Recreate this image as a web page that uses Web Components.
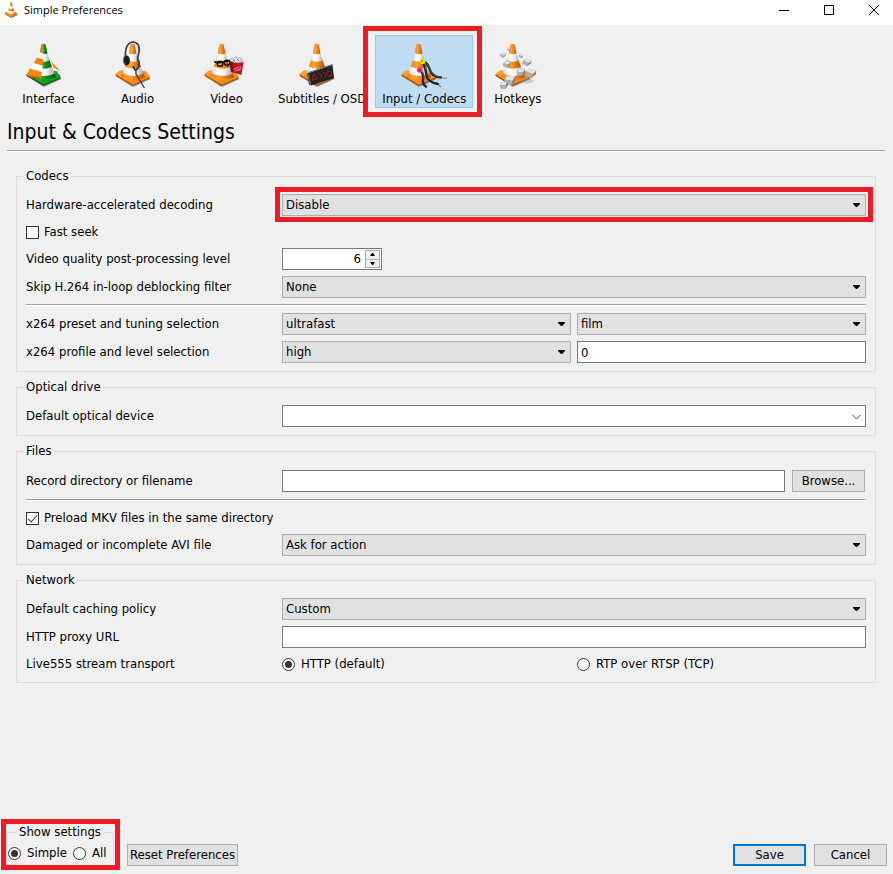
<!DOCTYPE html>
<html lang="en">
<head>
<meta charset="utf-8">
<title>Simple Preferences</title>
<style>
  html { height: 100%; }
  body { margin: 0; min-height: 100%; display: flex; background: #f0f0f0; color: #000; font: 13px/16px "DejaVu Sans Condensed", "DejaVu Sans", Tahoma, sans-serif; }
  prefs-window { flex: 1; min-width: 0; }
</style>
</head>
<body>
<prefs-window heading="Simple Preferences">
  <tool-strip slot="tools">
    <tool-item icon="interface">Interface</tool-item>
    <tool-item icon="audio">Audio</tool-item>
    <tool-item icon="video">Video</tool-item>
    <tool-item icon="subtitles">Subtitles / OSD</tool-item>
    <tool-item icon="input" selected>Input / Codecs</tool-item>
    <tool-item icon="hotkeys">Hotkeys</tool-item>
  </tool-strip>
  <page-title slot="title">Input &amp; Codecs Settings</page-title>

  <pref-group name="Codecs">
    <pref-row label="Hardware-accelerated decoding" fields="select=Disable" marked></pref-row>
    <pref-check label="Fast seek"></pref-check>
    <pref-row label="Video quality post-processing level" fields="spin=6"></pref-row>
    <pref-row label="Skip H.264 in-loop deblocking filter" fields="select=None"></pref-row>
    <pref-rule></pref-rule>
    <pref-row label="x264 preset and tuning selection" fields="select=ultrafast|select=film"></pref-row>
    <pref-row label="x264 profile and level selection" fields="select=high|text=0"></pref-row>
  </pref-group>
  <pref-group name="Optical drive">
    <pref-row label="Default optical device" fields="combo="></pref-row>
  </pref-group>
  <pref-group name="Files">
    <pref-row label="Record directory or filename" fields="file=Browse..."></pref-row>
    <pref-rule></pref-rule>
    <pref-check label="Preload MKV files in the same directory" checked></pref-check>
    <pref-row label="Damaged or incomplete AVI file" fields="select=Ask for action"></pref-row>
  </pref-group>
  <pref-group name="Network">
    <pref-row label="Default caching policy" fields="select=Custom"></pref-row>
    <pref-row label="HTTP proxy URL" fields="text="></pref-row>
    <pref-row label="Live555 stream transport" fields="radio=HTTP (default)|radio=RTP over RTSP (TCP)"></pref-row>
  </pref-group>

  <show-settings slot="footer"></show-settings>
  <push-button slot="footer">Reset Preferences</push-button>
  <push-button slot="actions" primary>Save</push-button>
  <push-button slot="actions">Cancel</push-button>
</prefs-window>

<script>
const ORANGE = ['#ffa338', '#f08010', '#b05208'];
const GREEN = ['#34b83a', '#0b921a', '#045c0c'];

// Traffic cone on a 50 x 50 canvas; the tip is at (19.5, 5).
function cone(c = ORANGE, id = 'o') {
  return `<defs>
    <linearGradient id="${id}" x1="0" x2="1"><stop offset="0" stop-color="${c[1]}"/><stop offset=".35" stop-color="${c[0]}"/><stop offset=".6" stop-color="${c[1]}"/><stop offset="1" stop-color="${c[2]}"/></linearGradient>
    <linearGradient id="${id}b" x1="0" x2="1" y2="1"><stop offset="0" stop-color="${c[0]}"/><stop offset="1" stop-color="${c[1]}"/></linearGradient>
    <linearGradient id="${id}w" x1="0" x2="1"><stop offset="0" stop-color="#d8d8d8"/><stop offset=".3" stop-color="#fff"/><stop offset=".6" stop-color="#f4f4f4"/><stop offset="1" stop-color="#a8a8a8"/></linearGradient></defs>
  <path d="M3 37L19 47.500Q20 48 21.500 47.300L37.500 40L36 38z" fill="#333" opacity=".55"/>
  <path d="M2.500 35.500L6.500 32L32.500 32.500L36.500 38Q37 39.500 35.500 40L21 46.300Q19.500 47 18 46L3 37.200Q2 36.500 2.500 35.500z" fill="${c[2]}"/>
  <path d="M2.500 35.200L7 31.300L32.500 32L36.500 37.500Q36.500 38.500 35 39L21 45Q19.500 45.500 18 44.600z" fill="url(#${id}b)"/>
  <path d="M10 33.500L8 37.500Q18 43.500 32 38.500L30.500 33.500z" fill="url(#${id})"/>
  <path d="M12 27.500L9.700 34Q18 39.500 30.500 34.800L27.800 27.500z" fill="url(#${id}w)"/>
  <path d="M14 21L11.800 27.600Q19 31.500 28 28L25.500 21z" fill="url(#${id})"/>
  <path d="M16 14L13.800 21.200Q19.500 24 25.700 21.500L23.300 14z" fill="url(#${id}w)"/>
  <path d="M17.300 5.500Q19.500 4 21.600 5.500L23.500 14.300Q19.500 16.200 15.900 14z" fill="url(#${id})"/>`;
}
const key = (x, y, s, r) => `<g transform="translate(${x} ${y}) rotate(${r}) scale(${s})"><path d="M-5 -1L-2 -4L5 -3L5 1L1 5L-5 3z" fill="#808080"/><path d="M-5 -1L-2 -4L5 -3L2 1z" fill="#e4e4e4"/><path d="M-5 -1L2 1L1 5L-5 3z" fill="#b0b0b0"/></g>`;
const ICONS = {
  interface: () => `${cone(GREEN, 'g')}
    <path d="M25 18L36.500 32L30 29z" fill="#e8e8e8"/><path d="M27 22L30.500 26L36.500 32L29.500 28.500z" fill="#f08a2a"/>
    <path d="M18 5Q19 4.500 19.500 4.500L19.500 14.500L16 14z" fill="#f08010"/>
    <path d="M16 13.500L19.500 14.500L19.300 21L13 19z" fill="#fafafa"/>
    <path d="M13 18.500L19.300 20.500L18.700 27L9.500 24.500z" fill="#f08010"/>
    <path d="M9.600 24L18.700 26.700L18 33.500L5.500 30z" fill="#fff"/>
    <path d="M5.500 29.500L18 33L16 39.500L2.500 37z" fill="#f58a12"/><path d="M2.500 36L16 38.500V40L3 38z" fill="#b85a04"/>`,
  audio: () => `${cone()}
    <g fill="none" stroke="#3a3a3a" stroke-width="1.700"><path d="M12.500 19Q11.500 4 20 3Q27.500 3.500 26 13L24.500 20Q27 23 26 27Q25 30.500 22 31L20 27"/><path d="M23 30.500V35L31.500 49" stroke-width="1.300"/></g>
    <ellipse cx="13.500" cy="21.500" rx="3.400" ry="5" fill="#1c1c1c"/><path d="M11 18Q9.500 21.500 11.500 25" stroke="#777" fill="none"/>`,
  video: () => `${cone()}
    <path d="M27 21.500L41.500 22.500L39.500 36L29.500 33z" fill="#c8101e"/><path d="M27 21.500L31 22L31 33.500L29 33z" fill="#8c0a14"/>
    <path d="M32.500 29L39 27L38.500 31L32.500 32.500z" fill="#e08088"/><path d="M33 31L38 28.500" stroke="#a01018"/>
    <path d="M28 22Q27 18.500 31 19.500Q33 16.500 36 19Q40 18 40.500 21Q42 21.500 41 23Q34 25 28 22z" fill="#dfe4ee" stroke="#9aa0b0" stroke-width=".7"/><path d="M31 21l2 1M35 20l2 2M38 21.500l1 .5" stroke="#778"/>
    <g fill="none" stroke="#111" stroke-width="1.400"><path d="M12 22.500L16 24L28 21.500"/><ellipse cx="18" cy="24.800" rx="2.800" ry="2.500"/><ellipse cx="25" cy="23.800" rx="2.800" ry="2.500"/></g>`,
  subtitles: () => `${cone()}
    <path d="M11.500 34L35.500 26L37 39L14 46.500z" fill="#222"/><path d="M10 34.500L12 33.500L14.500 46.500L12 46z" fill="#555"/><path d="M11.500 33.500L35.500 25.500" stroke="#666"/>
    <g fill="none" stroke="#b8161e" stroke-width="1"><path d="M15 41.500L17 35L20.500 39.500z"/><path d="M22 34.500L25 36.500L23.500 39.500M26 33L29 35.500L27.500 38.500"/><circle cx="32.300" cy="34.500" r="2.500"/></g>`,
  input: () => `${cone()}
    <g fill="none" stroke="#222" stroke-width="2.400" stroke-linecap="round"><path d="M24 22Q29 24 31 31T42 38.500"/><path d="M23 22Q27 29 27.500 36T39 45"/><path d="M21 31Q25 35 24 40T27 47.500"/></g>
    <path d="M41 38.500L48 39.500M39 45L42 48" stroke="#555" stroke-width="1.200" opacity=".6"/><g fill="none" stroke="#777" stroke-width=".6"><path d="M25 23Q30 25 31.500 31T41 38M22 31Q26 35 25 40"/></g>
    <circle cx="23.500" cy="22.500" r="2.800" fill="#f4e000"/><circle cx="23" cy="22" r="1" fill="#a89400"/><circle cx="20.800" cy="31" r="2.800" fill="#e8308a"/><circle cx="20.500" cy="31" r="1" fill="#701040"/><path d="M27 27v3" stroke="#18a030" stroke-width="1.500"/>`,
  hotkeys: () => `${cone()}<ellipse cx="34" cy="42" rx="7" ry="2.500" fill="#999" opacity=".4"/>
    ${key(16, 10, .3, 0)}${key(10, 16, .5, 10)}${key(14, 25, .7, 0)}${key(28, 17, .4, 20)}${key(34, 23, .8, 15)}${key(28, 33, .8, -5)}${key(38, 34, 1, 5)}${key(17, 41, 1.1, -5)}${key(11, 46, .8, -20)}`,
};

class ShadowElement extends HTMLElement {
  connectedCallback() {
    if (this.shadowRoot) return;
    this.attachShadow({ mode: 'open' }).innerHTML = `<style>*{box-sizing:border-box}${this.styles()}</style>${this.markup()}`;
  }
}

const CONTROL_CSS = `
  input, select, button { font: inherit; color: inherit; margin: 0; border-radius: 0; }
  label { white-space: nowrap; }
  input[type=checkbox], input[type=radio] { appearance: none; flex: none; width: 13px; height: 13px; border: 1px solid #333; background: #fff; display: grid; place-items: center; }
  input[type=radio] { border-radius: 50%; }
  input[type=radio]:checked::after { content: ""; width: 7px; height: 7px; border-radius: 50%; background: #333; }
  .opt { display: flex; align-items: center; gap: 6px; height: 20px; }
`;
const BUTTON_CSS = `
  button { height: 22px; min-width: 73px; border: 1px solid #adadad; background: #e1e1e1; font: inherit; color: inherit; padding: 0 2px; border-radius: 0; white-space: nowrap; display: block; }
`;

customElements.define('prefs-window', class extends ShadowElement {
  styles() { return `
    :host { display: flex; flex-direction: column; min-height: 100vh; }
    header { display: flex; align-items: center; justify-content: space-between; height: 25px; background: #fff; padding: 0 0 6px 4px; }
    .name { display: flex; align-items: center; gap: 6px; font: 11px/16px "Open Sans", "Noto Sans", sans-serif; }
    .controls { display: flex; }
    .controls button { width: 45px; height: 19px; padding: 0 0 0 6px; border: 0; background: none; display: grid; place-items: center; }
    svg { display: block; }
    main { display: flex; flex-direction: column; gap: 15px; padding: 25px 17px 20px 16px; }
    footer { display: flex; align-items: flex-end; gap: 8px; margin-top: auto; padding: 0 6px 8px; }
    .actions { display: flex; gap: 8px; margin-left: auto; }`; }
  markup() { return `
    <header>
      <div class="name"><svg width="14" height="16" viewBox="1 4 37 44" preserveAspectRatio="none">${cone()}</svg><span>${this.getAttribute('heading')}</span></div>
      <div class="controls">
        <button aria-label="Minimize"><svg width="10" height="10"><path d="M0 5.500H10" stroke="#000"/></svg></button>
        <button aria-label="Maximize"><svg width="10" height="10"><path d="M.5.5H9.500V9.500H.5z" fill="none" stroke="#000"/></svg></button>
        <button aria-label="Close"><svg width="10" height="10"><path d="M0 0L10 10M10 0L0 10" stroke="#000"/></svg></button>
      </div>
    </header>
    <slot name="tools"></slot><slot name="title"></slot>
    <main><slot></slot></main>
    <footer><slot name="footer"></slot><div class="actions"><slot name="actions"></slot></div></footer>`; }
});

customElements.define('tool-strip', class extends ShadowElement {
  styles() { return `:host { display: flex; padding: 10px 4px 0; }`; }
  markup() { return `<slot></slot>`; }
});

customElements.define('tool-item', class extends ShadowElement {
  styles() { return `
    :host { display: block; position: relative; }
    :host([selected]) { margin-left: 2px; }
    button { display: flex; flex-direction: column; align-items: center; gap: 2px; min-width: 89px; height: 73px; padding: 3px 6px 0; border: 1px solid transparent; background: none; font: inherit; color: inherit; white-space: nowrap; }
    :host([selected]) button { background: #c0dcf3; border-color: #90c8f6; }
    svg { display: block; flex: none; }
    .mark { position: absolute; inset: -9px -9px -9px -12px; border: 5px solid #ed1c24; pointer-events: none; }`; }
  markup() { return `<button><svg width="50" height="50" viewBox="0 0 50 50">${ICONS[this.getAttribute('icon')]()}</svg><slot></slot></button>${this.hasAttribute('selected') ? '<div class="mark"></div>' : ''}`; }
});

customElements.define('page-title', class extends ShadowElement {
  styles() { return `
    :host { display: block; margin: 12px 8px 0 7px; border-bottom: 1px solid #a0a0a0; box-shadow: 0 1px #fff; }
    h1 { margin: 0; font-size: 21px; line-height: 24px; font-weight: 400; padding-bottom: 6px; }`; }
  markup() { return `<h1><slot></slot></h1>`; }
});

customElements.define('pref-group', class extends ShadowElement {
  styles() { return `
    :host { display: block; }
    section { border: 1px solid #dcdcdc; padding: 0 9px 8px; display: flex; flex-direction: column; gap: 6px; }
    h2 { align-self: flex-start; margin: -9px 0 4px -2px; padding: 0 2px; background: #f0f0f0; font: inherit; line-height: 16px; }`; }
  markup() { const n = this.getAttribute('name'); return `<section aria-label="${n}"><h2>${n}</h2><slot></slot></section>`; }
});

customElements.define('pref-rule', class extends ShadowElement {
  styles() { return `:host { display: block; height: 3px; } div { height: 2px; border-top: 1px solid #a0a0a0; background: #fff; }`; }
  markup() { return `<div></div>`; }
});

customElements.define('pref-check', class extends ShadowElement {
  styles() { return `:host { display: block; } ${CONTROL_CSS}
    .opt { gap: 5px; }
    input:checked::after { content: ""; width: 4px; height: 8px; border: solid #444; border-width: 0 1px 1px 0; transform: rotate(42deg); margin-bottom: 2px; }`; }
  markup() { return `<div class="opt"><input type="checkbox" id="c" ${this.hasAttribute('checked') ? 'checked' : ''}><label for="c">${this.getAttribute('label')}</label></div>`; }
});

customElements.define('pref-row', class extends ShadowElement {
  styles() { return `
    :host { display: grid; grid-template-columns: 250px minmax(0, 1fr); column-gap: 6px; align-items: center; }
    ${CONTROL_CSS} ${BUTTON_CSS}
    .fields { position: relative; display: grid; grid-auto-flow: column; grid-auto-columns: minmax(0, 1fr); gap: 6px; }
    .mark { position: absolute; inset: -7px -7px -6px; border: 5px solid #ed1c24; pointer-events: none; }
    .drop { position: relative; display: block; }
    select, .text { display: block; width: 100%; height: 22px; padding: 0 3px; border: 1px solid #7a7a7a; background: #fff; appearance: none; outline: 0; }
    .drop select { border-color: #adadad; background: #e1e1e1; }
    .drop.open select { border-color: #7a7a7a; background: #fff; }
    .drop svg { position: absolute; right: 5px; top: 9px; pointer-events: none; }
    .spin { display: flex; width: 100px; height: 22px; border: 1px solid #7a7a7a; background: #fff; padding: 1px; }
    .spin input { flex: 1; min-width: 0; border: 0; padding: 0 4px 0 0; background: none; text-align: right; appearance: textfield; outline: 0; }
    .spin input::-webkit-inner-spin-button { display: none; }
    .steps { display: flex; flex-direction: column; width: 15px; }
    .steps button { flex: 1; min-width: 0; height: auto; padding: 0; display: grid; place-items: center; background: #f0f0f0; }
    .steps button + button { border-top: 0; }
    .file { display: flex; align-items: center; gap: 6px; height: 24px; }
    .file button { margin: 0 1px; }`; }
  field(kind, value, i, label) {
    const name = i ? `aria-label="${label} ${i + 1}"` : '';
    switch (kind) {
      case 'select': return `<div class="drop"><select id="f${i}" ${name}><option>${value}</option></select><svg width="9" height="5"><path d="M1 0H8V1L5 4H4L1 1z"/></svg></div>`;
      case 'combo': return `<div class="drop open"><select id="f${i}"><option></option></select><svg width="9" height="7"><path d="M.5 1L4.500 5L8.500 1" fill="none" stroke="#444"/></svg></div>`;
      case 'text': return `<input class="text" type="text" id="f${i}" ${name} value="${value}">`;
      case 'spin': return `<div class="spin"><input type="number" id="f${i}" value="${value}"><div class="steps"><button aria-label="Increase"><svg width="5" height="3"><path d="M0 3L2 0H3L5 3z"/></svg></button><button aria-label="Decrease"><svg width="5" height="3"><path d="M0 0H5L3 3H2z"/></svg></button></div></div>`;
      case 'file': return `<div class="file"><input class="text" type="text" id="f${i}"><button>${value}</button></div>`;
      case 'radio': return `<div class="opt"><input type="radio" name="r" id="r${i}" ${i ? '' : 'checked'}><label for="r${i}">${value}</label></div>`;
    }
  }
  markup() {
    const label = this.getAttribute('label');
    const fields = this.getAttribute('fields').split('|').map(f => f.split('='));
    const radio = fields[0][0] === 'radio';
    return `${radio ? `<span id="l">${label}</span>` : `<label for="f0">${label}</label>`}
      <div class="fields" ${radio ? 'role="radiogroup" aria-labelledby="l"' : ''}>${fields.map(([k, v], i) => this.field(k, v, i, label)).join('')}${this.hasAttribute('marked') ? '<div class="mark"></div>' : ''}</div>`;
  }
});

customElements.define('show-settings', class extends ShadowElement {
  styles() { return `:host { display: block; position: relative; margin: 0 5px -2px 0; } ${CONTROL_CSS}
    fieldset { margin: 0; min-width: 0; width: 108px; border: 1px solid #dcdcdc; border-bottom: 0; padding: 3px 1px 5px; display: flex; gap: 6px; }
    legend { margin: 0 auto; padding: 0 2px; }
    .mark { position: absolute; inset: -5px -6px -2px -5px; border: 5px solid #ed1c24; pointer-events: none; }`; }
  markup() { return `<fieldset><legend>Show settings</legend><div class="opt"><input type="radio" name="s" id="a" checked><label for="a">Simple</label></div><div class="opt"><input type="radio" name="s" id="b"><label for="b">All</label></div></fieldset><div class="mark"></div>`; }
});

customElements.define('push-button', class extends ShadowElement {
  styles() { return `:host { display: block; } ${BUTTON_CSS} :host([primary]) button { border: 2px solid #0078d7; }`; }
  markup() { return `<button><slot></slot></button>`; }
});
</script>
</body>
</html>
